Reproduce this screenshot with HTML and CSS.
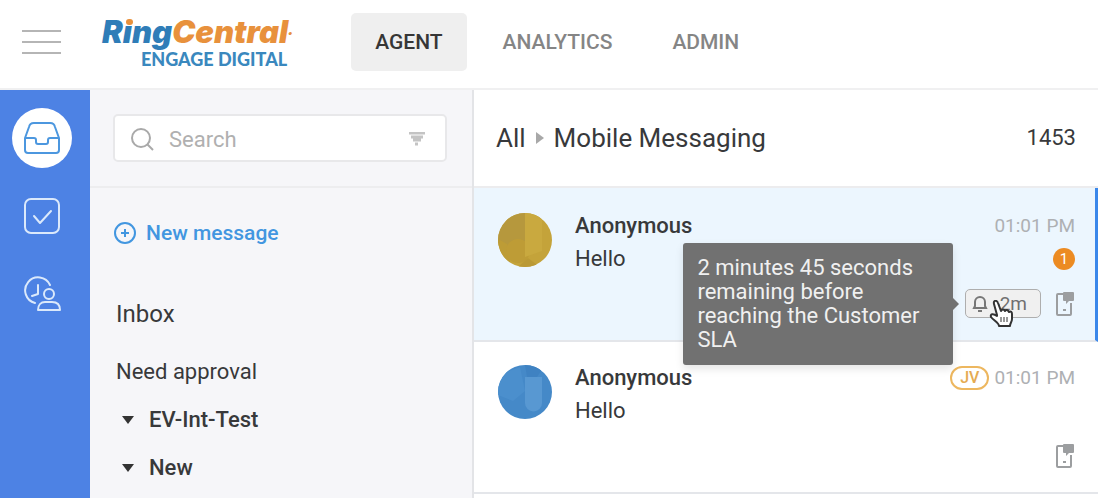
FILE: index.html
```html
<!DOCTYPE html>
<html lang="en">
<head>
    <meta charset="UTF-8">
    <meta name="viewport" content="width=device-width, initial-scale=1.0">
    <title>RingCentral Engage Digital</title>
    <link rel="stylesheet" href="styles.css">
</head>
<body>
    <header class="topbar">
        <button type="button" class="menu-btn" aria-label="Menu">
            <span></span>
            <span></span>
            <span></span>
        </button>
        <a href="#" class="logo">
            <span class="logo-name"><span class="logo-ring">R<span class="logo-i">ı</span>ng</span>Central<span class="logo-mark">•</span></span>
            <span class="logo-product">ENGAGE DIGITAL</span>
        </a>
        <nav class="tabs">
            <a href="#" class="tab active">AGENT</a>
            <a href="#" class="tab">ANALYTICS</a>
            <a href="#" class="tab">ADMIN</a>
        </nav>
    </header>

    <div class="layout">
        <nav class="rail">
            <a href="#" class="rail-item active" aria-label="Inbox">
                <svg width="38" height="34" viewBox="0 0 38 34">
                    <path d="M2 17v12a3 3 0 0 0 3 3h28a3 3 0 0 0 3-3V17M2 17L6 6a5 5 0 0 1 5-4h16a5 5 0 0 1 5 4l4 11M2 17h9q2 0 2 2v2q0 2 2 2h8q2 0 2-2v-2q0-2 2-2h9"/>
                </svg>
            </a>
            <a href="#" class="rail-item" aria-label="Tasks">
                <svg width="38" height="38" viewBox="0 0 38 38">
                    <rect x="2" y="2" width="34" height="34" rx="6"/>
                    <path d="M11 19l6 7 11-12"/>
                </svg>
            </a>
            <a href="#" class="rail-item" aria-label="Agents">
                <svg width="38" height="36" viewBox="0 0 38 36">
                    <path d="M12 27A13 13 0 1 1 27 9M15 9v9l-6 2"/>
                    <circle cx="26" cy="18" r="5"/>
                    <path d="M15 34c0-5 3-8 7-8h7c5 0 8 3 8 8z"/>
                </svg>
            </a>
        </nav>

        <aside class="sidebar">
            <form class="search">
                <div class="search-box">
                    <svg width="24" height="24" viewBox="0 0 24 24">
                        <circle cx="10" cy="11" r="9"/>
                        <path d="M16 17l6 6"/>
                    </svg>
                    <input type="text" placeholder="Search" aria-label="Search">
                    <button type="button" class="filter-btn" aria-label="Filter">
                        <svg width="16" height="14" viewBox="0 0 16 14">
                            <path d="M0 1h16M2 5h12M4 8h8M6 12h3"/>
                        </svg>
                    </button>
                </div>
            </form>
            <div class="folders">
                <button type="button" class="new-message">
                    <svg width="22" height="22" viewBox="0 0 22 22">
                        <circle cx="11" cy="11" r="10"/>
                        <path d="M11 7v8M7 11h8"/>
                    </svg>
                    New message
                </button>
                <h2>Inbox</h2>
                <a href="#" class="folder">Need approval</a>
                <button type="button" class="folder-group"><span class="caret"></span>EV-Int-Test</button>
                <button type="button" class="folder-group"><span class="caret"></span>New</button>
            </div>
        </aside>

        <main class="threads">
            <div class="threads-header">
                <h1>All <span class="crumb-arrow"></span> Mobile Messaging</h1>
                <span class="count">1453</span>
            </div>

            <article class="thread selected">
                <svg class="avatar" width="54" height="54" viewBox="0 0 54 54">
                    <defs><clipPath id="round"><circle cx="27" cy="27" r="27"/></clipPath></defs>
                    <g clip-path="url(#round)">
                        <path fill="#c4a33a" d="M0 0h54v54H0z"/>
                        <path fill="#b6983d" d="M0 0h27v28L12 36 0 30z"/>
                        <path fill="#bd9c36" d="M0 26l9 5 4 23H0z"/>
                        <circle cx="20" cy="38" r="12" fill="#be9c36"/>
                        <path fill="#c9a93f" d="M27 0h17v38L27 44z"/>
                        <path fill="#ba9935" d="M20 54l10-9 12 9z"/>
                    </g>
                </svg>
                <div class="thread-text">
                    <h3>Anonymous</h3>
                    <p>Hello</p>
                </div>
                <div class="thread-meta">
                    <div class="meta-line"><time>01:01 PM</time></div>
                    <div class="meta-line"><span class="badge">1</span></div>
                    <div class="meta-icons">
                        <div class="sla">
                            <button type="button" class="sla-btn" aria-describedby="sla-tip">
                                <svg width="16" height="18" viewBox="0 0 16 18">
                                    <path d="M2 13h12l-1-2V7A5 5 0 0 0 3 7v4zM6 16h4"/>
                                </svg>
                                -2m
                            </button>
                            <div class="tooltip" id="sla-tip" role="tooltip">2 minutes 45 seconds remaining before reaching the Customer SLA</div>
                            <svg class="pointer" width="24" height="28" viewBox="0 0 24 28">
                                <path fill="#fff" stroke="#333" stroke-width="2" stroke-linejoin="round" d="M8 15L5 4c-1-4 3-4 4-1l3 8c1-2 3-2 4 0 1-2 3-1 4 1 2-1 3 0 3 2v5c0 3-2 4-2 7H10c0-3-6-6-8-9-1-3 2-4 6-1z"/>
                                <path stroke="#333" stroke-width="1" d="M12 17v5M15 17v5M18 17v5"/>
                            </svg>
                        </div>
                        <svg class="phone" width="20" height="26" viewBox="0 0 20 26">
                            <path class="phone-body" d="M8 3H3a1 1 0 0 0-1 1v19a1 1 0 0 0 1 1h12a1 1 0 0 0 1-1V12"/>
                            <path class="phone-bubble" d="M9 1h9a1 1 0 0 1 1 1v7a1 1 0 0 1-1 1h-4l-3 3v-3H9a1 1 0 0 1-1-1V2a1 1 0 0 1 1-1zM8 18h3v2H8z"/>
                        </svg>
                    </div>
                </div>
            </article>

            <article class="thread">
                <svg class="avatar" width="54" height="54" viewBox="0 0 54 54">
                    <g clip-path="url(#round)">
                        <path fill="#4589c8" d="M0 0h54v54H0z"/>
                        <path fill="#4b8fcd" d="M0 10l22-8 5 24-12 10L0 30z"/>
                        <path fill="#3f82c2" d="M27 0h20l-8 12H29z"/>
                        <path fill="#5898d2" d="M27 12h17v26a8 8 0 0 1-17 0z"/>
                    </g>
                </svg>
                <div class="thread-text">
                    <h3>Anonymous</h3>
                    <p>Hello</p>
                </div>
                <div class="thread-meta">
                    <div class="meta-line"><span class="initials">JV</span><time>01:01 PM</time></div>
                    <div class="meta-line"></div>
                    <div class="meta-icons">
                        <svg class="phone" width="20" height="26" viewBox="0 0 20 26">
                            <path class="phone-body" d="M8 3H3a1 1 0 0 0-1 1v19a1 1 0 0 0 1 1h12a1 1 0 0 0 1-1V12"/>
                            <path class="phone-bubble" d="M9 1h9a1 1 0 0 1 1 1v7a1 1 0 0 1-1 1h-4l-3 3v-3H9a1 1 0 0 1-1-1V2a1 1 0 0 1 1-1zM8 18h3v2H8z"/>
                        </svg>
                    </div>
                </div>
            </article>
        </main>
    </div>
</body>
</html>
```

FILE: styles.css
```css
* {
  box-sizing: border-box;
}
body {
  margin: 0;
  min-height: 100vh;
  display: flex;
  flex-direction: column;
  font-family: Roboto, "Liberation Sans", sans-serif;
  font-size: 22px;
  color: #38393b;
  background-color: #fff;
}
h1, h2, h3, p {
  margin: 0;
  font-weight: 400;
}
a {
  color: inherit;
  text-decoration: none;
}
button, input {
  font: inherit;
  color: inherit;
  background: none;
  border: none;
  padding: 0;
}
button {
  cursor: pointer;
}
svg {
  display: block;
  flex: none;
  fill: none;
}

/* top bar */
.topbar {
  display: flex;
  align-items: center;
  padding: 13px 22px 17px;
  border-bottom: 2px solid #f0f0f1;
}
.menu-btn {
  display: flex;
  flex-direction: column;
  gap: 9px;
  width: 39px;
}
.menu-btn span {
  height: 2px;
  background-color: #b5b5b5;
}
.logo {
  display: flex;
  flex-direction: column;
  align-items: flex-end;
  margin: 0 59px 0 41px;
  font-family: Lato, "Liberation Sans", sans-serif;
  font-weight: 900;
}
.logo-name {
  font-family: Inter, "Liberation Sans", sans-serif;
  font-size: 31px;
  line-height: 34px;
  font-style: italic;
  color: #e8913c;
}
.logo-ring {
  color: #2f7db8;
}
.logo-i {
  position: relative;
}
.logo-i::after {
  content: "";
  position: absolute;
  left: 3px;
  top: 6px;
  width: 7px;
  height: 6px;
  border-radius: 3px;
  background-color: #e8913c;
}
.logo-mark {
  font-size: 10px;
  vertical-align: top;
}
.logo-product {
  padding-right: 5px;
  font-size: 18px;
  line-height: 20px;
  color: #3a88be;
}
.tabs {
  display: flex;
  gap: 12px;
}
.tab {
  padding: 0 24px;
  font-size: 21px;
  line-height: 58px;
  font-weight: 500;
  color: #858585;
  border-radius: 5px;
}
.tab.active {
  color: #363636;
  background-color: #efefef;
}

.layout {
  flex: 1;
  display: flex;
}

/* left rail */
.rail {
  flex: none;
  width: 90px;
  padding: 18px 6px 0 0;
  display: flex;
  flex-direction: column;
  align-items: center;
  gap: 18px;
  background-color: #4d82e4;
}
.rail-item {
  width: 60px;
  height: 60px;
  display: flex;
  align-items: center;
  justify-content: center;
  border-radius: 50%;
}
.rail-item svg {
  stroke: #dbe9fb;
  stroke-width: 2;
  stroke-linecap: round;
  stroke-linejoin: round;
}
.rail-item.active {
  background-color: #fff;
}
.rail-item.active svg {
  stroke: #4c97df;
}

/* folders */
.sidebar {
  flex: none;
  width: 384px;
  background-color: #f6f6f9;
  border-right: 2px solid #e3e4e7;
}
.search {
  padding: 24px 25px 24px 23px;
  border-bottom: 2px solid #ededef;
}
.search-box {
  display: flex;
  align-items: center;
  gap: 14px;
  height: 48px;
  padding: 2px 20px 0 16px;
  background-color: #fff;
  border: 2px solid #e8e8ea;
  border-radius: 5px;
}
.search-box svg {
  stroke: #a9a9a9;
  stroke-width: 2;
}
.search-box input {
  flex: 1;
  min-width: 0;
  outline: none;
}
.search-box input::placeholder {
  color: #b0b0b0;
}
.search-box .filter-btn svg {
  stroke: #c4c4c4;
  stroke-width: 3;
}
.folders {
  padding: 24px 25px 0 24px;
}
.new-message {
  display: flex;
  align-items: center;
  gap: 10px;
  font-size: 21px;
  line-height: 42px;
  font-weight: 500;
  color: #4296e0;
}
.new-message svg {
  stroke: #4296e0;
  stroke-width: 2;
}
h2 {
  margin: 36px 0 10px;
  padding-left: 2px;
  font-size: 24px;
  line-height: 48px;
}
.folder, .folder-group {
  display: flex;
  align-items: center;
  padding-left: 2px;
  line-height: 48px;
}
.folder-group {
  gap: 15px;
  padding-left: 8px;
  font-weight: 500;
}
.caret {
  border: 6px solid transparent;
  border-top: 8px solid #333;
  border-bottom: 0;
}

/* conversation list */
.threads {
  flex: 1;
  min-width: 0;
}
.threads-header {
  display: flex;
  justify-content: space-between;
  align-items: center;
  padding: 0 22px;
  line-height: 96px;
  border-bottom: 2px solid #ececee;
}
h1 {
  display: flex;
  align-items: center;
  gap: 10px;
  font-size: 26px;
}
.crumb-arrow {
  border: 6px solid transparent;
  border-left: 8px solid #a8a8a8;
  border-right: 0;
}
.thread {
  display: flex;
  padding: 19px 23px 0 24px;
  min-height: 152px;
  border-bottom: 2px solid #e4e6ea;
}
.thread.selected {
  min-height: 154px;
  padding-top: 21px;
  padding-right: 20px;
  background-color: #ecf6fe;
  border-right: 3px solid #3a87ea;
}
.avatar {
  margin-top: 4px;
}
.thread-text {
  flex: 1;
  padding-left: 23px;
  line-height: 33px;
}
.thread-text h3 {
  font-size: 22px;
  font-weight: 500;
}
.thread-meta {
  display: flex;
  flex-direction: column;
  align-items: flex-end;
}
.meta-line {
  display: flex;
  align-items: center;
  gap: 5px;
  height: 33px;
}
time {
  font-size: 19px;
  color: #aeb0b3;
}
.badge {
  width: 22px;
  border-radius: 50%;
  font-size: 15px;
  line-height: 22px;
  text-align: center;
  color: #fff;
  background-color: #ec8b22;
}
.initials {
  padding: 0 8px;
  border: 2px solid #edb75f;
  border-radius: 12px;
  font-size: 16px;
  line-height: 20px;
  font-weight: 500;
  color: #e5ab52;
}
.meta-icons {
  display: flex;
  align-items: center;
  gap: 14px;
  height: 57px;
}
.phone-body {
  stroke: #9c9ea0;
  stroke-width: 2;
}
.phone-bubble {
  fill: #9c9ea0;
}
.sla {
  position: relative;
}
.sla-btn {
  display: flex;
  align-items: center;
  gap: 6px;
  padding: 0 13px 0 6px;
  font-size: 19px;
  line-height: 27px;
  color: #707070;
  background-color: #f0f0f0;
  border: 1px solid #aeaeae;
  border-radius: 5px;
}
.sla-btn svg {
  stroke: #777;
  stroke-width: 2;
}
.tooltip {
  position: absolute;
  z-index: 1;
  right: calc(100% + 12px);
  top: 50%;
  transform: translateY(-50%);
  width: 270px;
  padding: 13px 14px;
  font-size: 22px;
  line-height: 24px;
  color: #f0f0f0;
  background-color: #717171;
  border-radius: 3px;
  box-shadow: 0 4px 8px rgba(0, 0, 0, 0.1);
}
.tooltip::after {
  content: "";
  position: absolute;
  left: 100%;
  top: 50%;
  margin-top: -6px;
  border: 6px solid transparent;
  border-left-color: #717171;
  border-right: 0;
}
.pointer {
  position: absolute;
  left: 24px;
  top: 11px;
}
```
